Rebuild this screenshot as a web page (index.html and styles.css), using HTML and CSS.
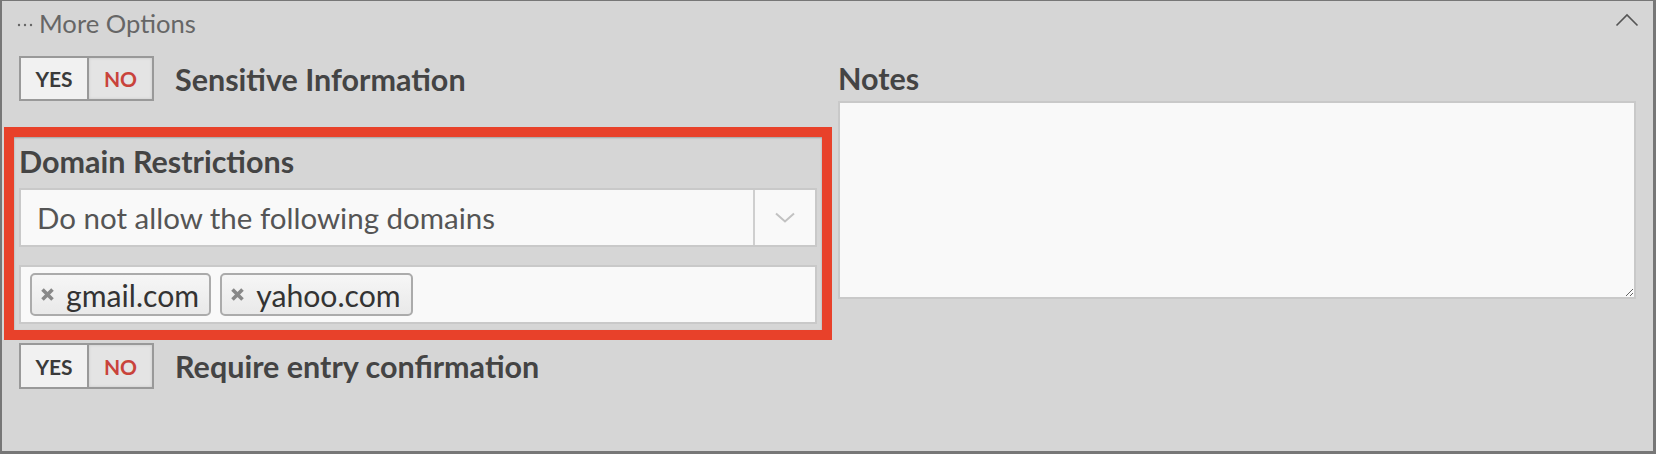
FILE: index.html
```html
<!DOCTYPE html>
<html>
<head>
<meta charset="utf-8">
<link rel="stylesheet" href="styles.css">
</head>
<body>
<div class="panel">
  <div class="header">
    <div class="title">
      <svg class="dots" width="16" height="4" viewBox="0 0 16 4"><circle cx="2" cy="2" r="1.2"/><circle cx="8" cy="2" r="1.2"/><circle cx="14" cy="2" r="1.2"/></svg>
      <span>More Options</span>
    </div>
    <svg class="collapse" width="24" height="14" viewBox="0 0 24 14"><polyline points="1.5,12.5 12,2 22.5,12.5"/></svg>
  </div>
  <div class="body">
    <div class="col">
      <div class="toggle-row">
        <div class="toggle"><span class="yes">YES</span><span class="no">NO</span></div>
        <span class="row-label">Sensitive Information</span>
      </div>
      <section class="highlight">
        <div class="field-label">Domain Restrictions</div>
        <div class="select">
          <span class="select-value">Do not allow the following domains</span>
          <span class="select-arrow"><svg width="20" height="11" viewBox="0 0 20 11"><polyline points="1,1.5 10,9.5 19,1.5"/></svg></span>
        </div>
        <div class="tags">
          <span class="tag"><svg class="tag-x" width="15" height="15" viewBox="0 0 15 15"><path d="M2.5 2.5L12.5 12.5M12.5 2.5L2.5 12.5"/></svg>gmail.com</span>
          <span class="tag"><svg class="tag-x" width="15" height="15" viewBox="0 0 15 15"><path d="M2.5 2.5L12.5 12.5M12.5 2.5L2.5 12.5"/></svg>yahoo.com</span>
        </div>
      </section>
      <div class="toggle-row second">
        <div class="toggle"><span class="yes">YES</span><span class="no">NO</span></div>
        <span class="row-label">Require entry confirmation</span>
      </div>
    </div>
    <div class="col">
      <div class="field-label notes-label">Notes</div>
      <textarea class="notes"></textarea>
    </div>
  </div>
</div>
</body>
</html>
```

FILE: styles.css
```css
* { box-sizing: border-box; }
html, body { margin: 0; padding: 0; }
body { font-family: Lato, "Open Sans", sans-serif; color: #444; }

.panel {
  width: 1656px;
  height: 454px;
  background: #d6d6d6;
  border-style: solid;
  border-color: #777;
  border-width: 1px 3px 3px 2px;
}

.header {
  height: 44px;
  display: flex;
  align-items: center;
  justify-content: space-between;
  padding: 0 14px 0 15px;
}
.title {
  display: flex;
  align-items: center;
  gap: 6px;
  color: #666;
  font-size: 25.6px;
}
.dots { fill: #666; margin-top: 4px; }
.collapse { fill: none; stroke: #555; stroke-width: 1.6; margin-top: -6px; }

.body {
  display: grid;
  grid-template-columns: 1fr 1fr;
  column-gap: 21px;
  padding: 11px 17px 0 17px;
}

.toggle-row {
  display: flex;
  align-items: center;
  gap: 21px;
  height: 45px;
}
.toggle-row.second { margin-top: 3px; height: 46px; }
.toggle {
  display: flex;
  height: 100%;
  border: 2px solid #999;
  font-weight: 700;
  font-size: 21px;
}
.toggle span {
  display: flex;
  align-items: center;
  justify-content: center;
}
.yes { width: 68px; background: #f1f1f1; color: #3a3a3a; border-right: 2px solid #999; }
.no { width: 63px; background: #e4e4e4; color: #c9433b; box-shadow: inset 0 0 3px rgba(0,0,0,0.12); }
.row-label { font-weight: 700; font-size: 30.5px; color: #444; }

.highlight {
  margin: 26px -15px 0;
  border: 10px solid #e8412a;
  padding: 6px 5px 6px;
  box-shadow: inset 0 1px 2px rgba(0,0,0,0.25);
}
.field-label {
  font-weight: 700;
  font-size: 30.5px;
  line-height: 36px;
  color: #444;
}
.highlight .field-label { margin-bottom: 9px; }

.select {
  display: flex;
  height: 59px;
  background: #f9f9f9;
  border: 2px solid #c9c9c9;
}
.select-value {
  flex: 1;
  display: flex;
  align-items: center;
  padding-left: 16px;
  font-size: 29.5px;
  color: #555;
}
.select-arrow {
  width: 62px;
  display: flex;
  align-items: center;
  justify-content: center;
  border-left: 2px solid #cfcfcf;
}
.select-arrow svg { fill: none; stroke: #c2c2c2; stroke-width: 2; }

.tags {
  margin-top: 18px;
  height: 59px;
  background: #f9f9f9;
  border: 2px solid #c9c9c9;
  display: flex;
  align-items: center;
  gap: 9px;
  padding: 0 10px 0 9px;
}
.tag {
  display: flex;
  align-items: center;
  height: 43px;
  padding: 0 10px 0 8px;
  border: 2px solid #ababab;
  border-radius: 5px;
  background: linear-gradient(#f6f6f6, #e9e9e9);
  font-size: 30.2px;
  color: #333;
}
.tag-x { fill: none; stroke: #888; stroke-width: 3.6; margin-right: 11px; }

.notes-label { line-height: 44px; }
.notes {
  display: block;
  width: 100%;
  height: 198px;
  margin-top: 1px;
  background: #f9f9f9;
  border: 2px solid #c9c9c9;
  outline: none;
  font-family: Lato, sans-serif;
}
```
